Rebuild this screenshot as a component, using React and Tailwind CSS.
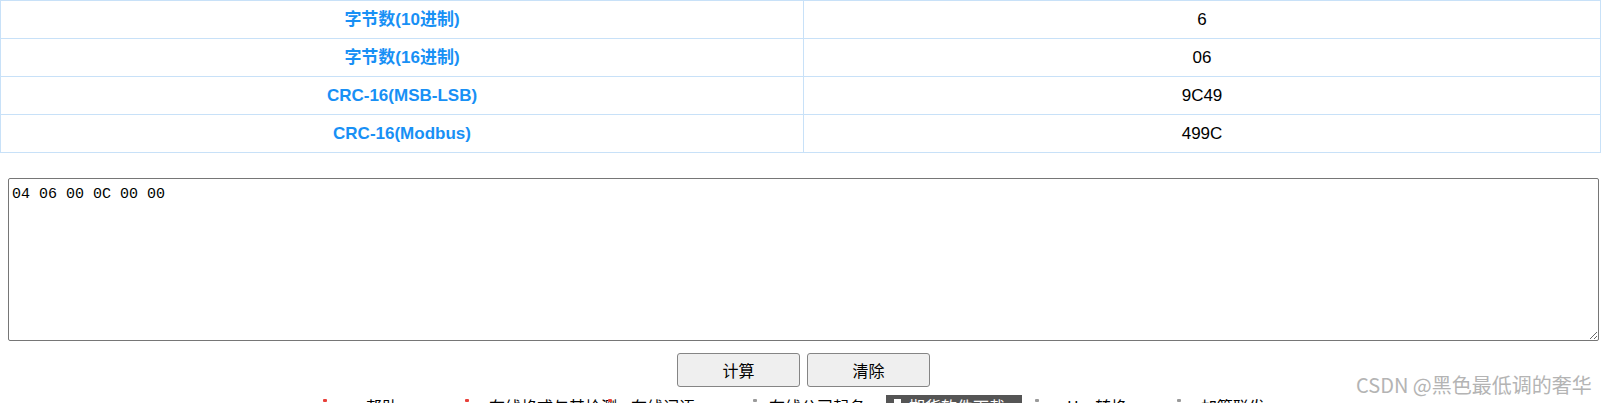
import React from "react";

const rows = [
  ["字节数(10进制)", "6"],
  ["字节数(16进制)", "06"],
  ["CRC-16(MSB-LSB)", "9C49"],
  ["CRC-16(Modbus)", "499C"],
];

const navItems = [
  { w: "w-[142px]", gap: "w-[39px]", dot: "bg-[#e8403a]", text: "帮助" },
  { w: "w-[143px]", gap: "w-[20px]", dot: "bg-[#e8403a]", text: "在线格式与其检测" },
  { w: "w-[145px]", gap: "w-[19px]", dot: "bg-[#e8403a]", text: "在线词语" },
  { w: "w-[133px]", gap: "w-[12px]", dot: "bg-[#9a9a9a]", text: "在线公司起名" },
];

const navItems2 = [
  { w: "w-[142px]", gap: "w-[28px]", dot: "bg-[#9a9a9a]", text: "Hex转换" },
  { w: "w-[142px]", gap: "w-[20px]", dot: "bg-[#9a9a9a]", text: "加算联发" },
];

function NavItem({ item }) {
  return (
    <div className={`${item.w} flex items-start shrink-0`}>
      <span className={`mt-[4px] h-[3px] w-[4px] shrink-0 rounded-[1px] ${item.dot}`} />
      <span className={`${item.gap} shrink-0`} />
      <span className="whitespace-nowrap">{item.text}</span>
    </div>
  );
}

export default function App() {
  return (
    <div className="relative h-[403px] w-[1602px] overflow-hidden bg-white">
      <div className="w-[1601px] border-l border-r border-t border-[#c8e1f8] font-['Liberation_Sans','Noto_Sans_CJK_SC',sans-serif] text-[17px]">
        {rows.map(([k, v]) => (
          <div key={k} className="flex h-[38px] border-b border-[#c8e1f8]">
            <div className="flex w-[803px] items-center justify-center border-r border-[#c8e1f8]">
              <span className="font-bold text-[#1890f5]">{k}</span>
            </div>
            <div className="flex flex-1 items-center justify-center">
              <span className="text-black">{v}</span>
            </div>
          </div>
        ))}
      </div>

      <div className="ml-[8px] mt-[25px]">
        <textarea
          className="block h-[163px] w-[1591px] rounded-[2px] border border-[#767676] px-[3px] pt-[5px] font-['Liberation_Mono',monospace] text-[15px] text-black outline-none"
          defaultValue="04 06 00 0C 00 00"
        />
      </div>

      <div className="mt-[12px] flex justify-center gap-[7px] pl-[5px] font-['Noto_Sans_CJK_SC',sans-serif] text-[16px]">
        <button className="h-[34px] w-[123px] rounded-[3px] border border-[#858585] bg-[#efefef] text-black">计算</button>
        <button className="h-[34px] w-[123px] rounded-[3px] border border-[#858585] bg-[#efefef] text-black">清除</button>
      </div>

      <div className="mt-[8px] flex pl-[323px] font-['Noto_Sans_CJK_SC',sans-serif] text-[16px] leading-[22px] text-black">
        {navItems.map((it) => (
          <NavItem key={it.text} item={it} />
        ))}
        <div className="flex h-[22px] w-[136px] shrink-0 items-start bg-[#555555] pl-[8px] text-white">
          <span className="mt-[4px] h-[4px] w-[7px] bg-white" />
          <span className="ml-[8px] whitespace-nowrap">期货软件下载</span>
        </div>
        <span className="w-[13px] shrink-0" />
        {navItems2.map((it) => (
          <NavItem key={it.text} item={it} />
        ))}
      </div>

      <div className="absolute left-[1356px] top-[373px] whitespace-nowrap font-['Noto_Sans_CJK_SC',sans-serif] text-[20px] leading-[24px] text-[#b4b4b4]">
        CSDN @黑色最低调的奢华
      </div>
    </div>
  );
}
